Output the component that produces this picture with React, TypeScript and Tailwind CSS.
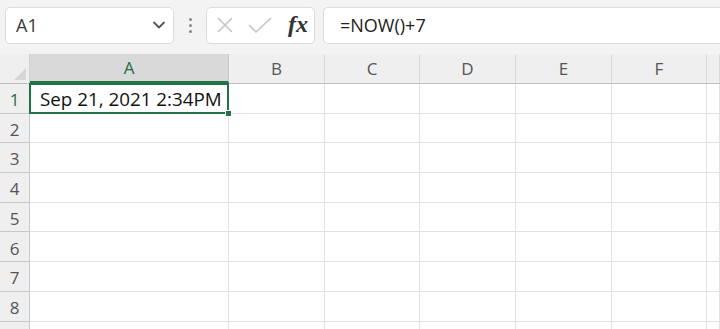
import React from "react";

const cols = [
  { name: "A", w: "w-[199px]" },
  { name: "B", w: "w-[96px]" },
  { name: "C", w: "w-[95px]" },
  { name: "D", w: "w-[96px]" },
  { name: "E", w: "w-[96px]" },
  { name: "F", w: "w-[95px]" },
  { name: "", w: "flex-1" },
];

const rows = [1, 2, 3, 4, 5, 6, 7, 8, 9];

export default function App() {
  return (
    <div
      className="w-[720px] h-[329px] overflow-hidden bg-[#f3f3f3] text-[#333]"
      style={{ fontFamily: '"Open Sans", "Noto Sans", sans-serif' }}
    >
      {/* formula bar */}
      <div className="flex items-center h-[49px] pt-[1px] pl-[5px]">
        <div className="flex items-center justify-between w-[169px] h-[37px] bg-white border border-[#dcdcdc] rounded-[5px] pl-[10px] pr-[6px]">
          <span className="text-[18px] text-[#3a3a3a]">A1</span>
          <svg width="16" height="16" viewBox="0 0 16 16" fill="none">
            <path d="M3 5.5 L8 10.5 L13 5.5" stroke="#555" strokeWidth="1.8" strokeLinecap="round" strokeLinejoin="round" />
          </svg>
        </div>
        <div className="flex flex-col items-center justify-center gap-[3px] w-[32px]">
          <span className="w-[3px] h-[3px] rounded-full bg-[#888]" />
          <span className="w-[3px] h-[3px] rounded-full bg-[#888]" />
          <span className="w-[3px] h-[3px] rounded-full bg-[#888]" />
        </div>
        <div className="flex items-center w-[109px] h-[37px] bg-white border border-[#dcdcdc] rounded-[5px] pl-[9px] pr-[6px]">
          <svg width="18" height="18" viewBox="0 0 18 18" fill="none">
            <path d="M2 2 L16 16 M16 2 L2 16" stroke="#c4c4c4" strokeWidth="1.6" />
          </svg>
          <svg width="26" height="18" viewBox="0 0 26 18" fill="none" className="ml-[13px]">
            <path d="M2 9 L9 16 L24 2" stroke="#c4c4c4" strokeWidth="1.6" />
          </svg>
          <span
            className="ml-auto text-[24px] italic font-semibold text-[#333] leading-none pb-[2px]"
            style={{ fontFamily: '"Liberation Serif", "DejaVu Serif", serif' }}
          >
            fx
          </span>
        </div>
        <div className="flex items-center flex-1 h-[37px] ml-[8px] bg-white border border-[#dcdcdc] border-r-0 rounded-l-[5px] pl-[16px]">
          <span className="text-[18px] text-[#222]">=NOW()+7</span>
        </div>
      </div>

      <div className="h-[5px]" />

      {/* grid */}
      <div className="flex flex-col">
        <div className="flex h-[30px] bg-[#efefef] border-b border-[#bfbfbf]">
          <div className="w-[30px] relative border-r border-[#d0d0d0]">
            <svg width="12" height="12" viewBox="0 0 12 12" className="absolute right-[3px] bottom-[3px]">
              <path d="M12 0 L12 12 L0 12 Z" fill="#d6d6d6" />
            </svg>
          </div>
          {cols.map((c) => (
            <div
              key={c.name || "g"}
              className={`${c.w} flex items-center justify-center text-[17px] border-r ${
                c.name === "A"
                  ? "bg-[#d9d9d9] text-[#1f6b43] border-b-2 border-b-[#217346] border-r-[#c8c8c8]"
                  : "text-[#555] border-[#dadada]"
              }`}
            >
              {c.name}
            </div>
          ))}
        </div>
        {rows.map((r) => (
          <div key={r} className="flex h-[29.7px] bg-white">
            <div
              className={`w-[30px] flex items-center justify-center pt-[3px] text-[17px] bg-[#efefef] border-r border-b border-[#c8c8c8] ${
                r === 1 ? "bg-[#d9d9d9] text-[#1f6b43]" : "text-[#555]"
              }`}
            >
              {r < 9 ? r : ""}
            </div>
            {cols.map((c, i) => (
              <div
                key={i}
                className={`${c.w} relative border-r border-b border-[#e1e1e1] ${
                  r === 1 && i === 0 ? "z-10" : ""
                }`}
              >
                {r === 1 && i === 0 && (
                  <>
                    <div className="absolute -left-[1px] -top-[1px] -right-[1px] -bottom-[1px] border-2 border-[#217346] flex items-center pl-[9px] pt-[2px] text-[18.8px] text-[#111] whitespace-nowrap">
                      Sep 21, 2021 2:34PM
                    </div>
                    <div className="absolute -right-[4px] -bottom-[4px] w-[7px] h-[7px] bg-[#217346] border border-white" />
                  </>
                )}
              </div>
            ))}
          </div>
        ))}
      </div>
    </div>
  );
}
